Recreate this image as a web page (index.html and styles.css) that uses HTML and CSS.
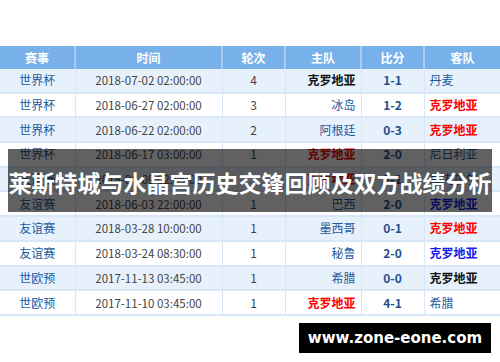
FILE: index.html
```html
<!DOCTYPE html>
<html lang="zh">
<head>
<meta charset="utf-8">
<link rel="stylesheet" href="styles.css">
</head>
<body>
<div class="page">
  <table class="matches">
    <colgroup>
      <col class="c1"><col class="c2"><col class="c3"><col class="c4"><col class="c5"><col class="c6">
    </colgroup>
    <thead>
      <tr><th>赛事</th><th>时间</th><th>轮次</th><th>主队</th><th>比分</th><th>客队</th></tr>
    </thead>
    <tbody>
      <tr class="odd"><td class="ev">世界杯</td><td class="tm">2018-07-02 02:00:00</td><td class="rd">4</td><td class="home"><b class="black">克罗地亚</b></td><td class="sc">1-1</td><td class="away">丹麦</td></tr>
      <tr><td class="ev">世界杯</td><td class="tm">2018-06-27 02:00:00</td><td class="rd">3</td><td class="home">冰岛</td><td class="sc">1-2</td><td class="away"><b class="red">克罗地亚</b></td></tr>
      <tr class="odd"><td class="ev">世界杯</td><td class="tm">2018-06-22 02:00:00</td><td class="rd">2</td><td class="home">阿根廷</td><td class="sc">0-3</td><td class="away"><b class="red">克罗地亚</b></td></tr>
      <tr><td class="ev">世界杯</td><td class="tm">2018-06-17 03:00:00</td><td class="rd">1</td><td class="home"><b class="red">克罗地亚</b></td><td class="sc">2-0</td><td class="away">尼日利亚</td></tr>
      <tr class="odd"><td class="ev">友谊赛</td><td class="tm">2018-06-09 02:45:00</td><td class="rd">1</td><td class="home"><b class="red">克罗地亚</b></td><td class="sc">2-1</td><td class="away">塞内加尔</td></tr>
      <tr><td class="ev">友谊赛</td><td class="tm">2018-06-03 22:00:00</td><td class="rd">1</td><td class="home">巴西</td><td class="sc">2-0</td><td class="away"><b class="blue">克罗地亚</b></td></tr>
      <tr class="odd"><td class="ev">友谊赛</td><td class="tm">2018-03-28 10:00:00</td><td class="rd">1</td><td class="home">墨西哥</td><td class="sc">0-1</td><td class="away"><b class="red">克罗地亚</b></td></tr>
      <tr><td class="ev">友谊赛</td><td class="tm">2018-03-24 08:30:00</td><td class="rd">1</td><td class="home">秘鲁</td><td class="sc">2-0</td><td class="away"><b class="blue">克罗地亚</b></td></tr>
      <tr class="odd"><td class="ev">世欧预</td><td class="tm">2017-11-13 03:45:00</td><td class="rd">1</td><td class="home">希腊</td><td class="sc">0-0</td><td class="away"><b class="black">克罗地亚</b></td></tr>
      <tr><td class="ev">世欧预</td><td class="tm">2017-11-10 03:45:00</td><td class="rd">1</td><td class="home"><b class="red">克罗地亚</b></td><td class="sc">4-1</td><td class="away">希腊</td></tr>
    </tbody>
  </table>
  <div class="title">莱斯特城与水晶宫历史交锋回顾及双方战绩分析</div>
  <div class="site">www.zone-eone.com</div>
</div>
</body>
</html>
```

FILE: styles.css
```css
html, body {
  margin: 0;
  padding: 0;
  background: #ffffff;
}
.page {
  position: relative;
  width: 500px;
  height: 362px;
  overflow: hidden;
  padding-top: 46px;
  box-sizing: border-box;
  font-family: "Noto Sans CJK SC", "Noto Sans", sans-serif;
}
.matches {
  width: 500px;
  border-collapse: collapse;
  table-layout: fixed;
  font-size: 12px;
}
.c1 { width: 75px; }
.c2 { width: 147px; }
.c3 { width: 63px; }
.c4 { width: 76px; }
.c5 { width: 63px; }
.c6 { width: 76px; }
.matches th {
  height: 23px;
  padding: 0;
  background: #78b1ea;
  color: #ffffff;
  font-weight: bold;
  font-size: 12px;
  border-left: 2px solid #a9cdf2;
  line-height: 23px;
}
.matches th:first-child { border-left: none; }
.matches td {
  height: 22.7px;
  padding: 0;
  border: 1px solid #d8e7f7;
  border-top: none;
  line-height: 20px;
  text-align: center;
  white-space: nowrap;
}
.matches td:first-child { border-left: none; }
.matches td:last-child { border-right: none; }
.matches tr.odd td { background: #e7f1fc; }
.matches tr td { background: #ffffff; border-bottom: 2px solid #d8e7f7; }
.ev { color: #1d5a9c; }
.tm { color: #444444; font-size: 11.5px; }
.rd { color: #444444; }
.home { text-align: right !important; padding-right: 5px !important; color: #1d5a9c; }
.away { text-align: left !important; padding-left: 5px !important; color: #1d5a9c; }
.sc { color: #1f4f8c; font-weight: bold; }
b { font-weight: bold; }
.black { color: #111111; }
.red { color: #ff0000; }
.blue { color: #1a1aee; }
.title {
  position: absolute;
  left: 8px;
  top: 149px;
  width: 484px;
  height: 63px;
  background: rgba(0, 0, 0, 0.62);
  color: #ffffff;
  font-size: 23px;
  font-weight: bold;
  line-height: 66px;
  text-align: center;
  white-space: nowrap;
}
.site {
  position: absolute;
  left: 299px;
  top: 323px;
  width: 192px;
  height: 30px;
  background: #000000;
  color: #ffffff;
  font-family: "DejaVu Sans", sans-serif;
  font-weight: bold;
  font-size: 15px;
  line-height: 30px;
  text-align: center;
}
```
